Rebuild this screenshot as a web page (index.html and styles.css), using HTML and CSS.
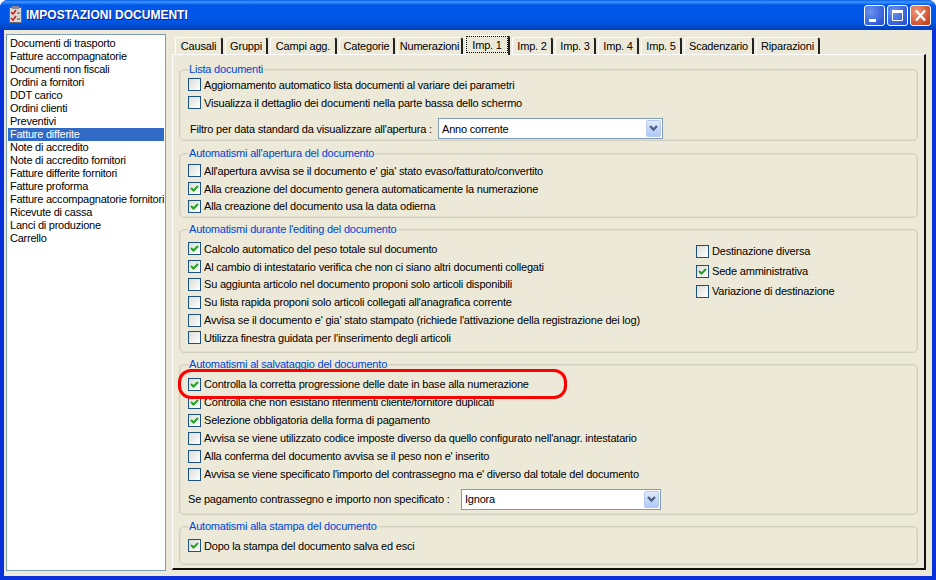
FILE: index.html
```html
<!DOCTYPE html>
<html lang="it">
<head>
<meta charset="utf-8">
<title>Impostazioni documenti</title>
<link rel="stylesheet" href="styles.css">
</head>
<body>
<div class="window">
  <header class="titlebar">
    <svg class="app-icon" width="14" height="18" viewBox="0 0 14 18"><rect x="0.5" y="1.5" width="12" height="15" fill="#d8d8d0" stroke="#667"/><rect x="3" y="0" width="7" height="3" fill="#889"/><path d="M2 6l2 2 3-4M2 12l2 2 3-4" fill="none" stroke="#c22" stroke-width="1.6"/><path d="M8 7h3M8 13h3" stroke="#445"/></svg>
    <span class="title">IMPOSTAZIONI DOCUMENTI</span>
    <div class="controls">
      <button class="ctl ctl-blue"><svg width="21" height="21" viewBox="0 0 21 21"><rect x="5" y="14" width="7" height="3" fill="#fff"/></svg></button>
      <button class="ctl ctl-blue"><svg width="21" height="21" viewBox="0 0 21 21"><path d="M5.5 5.5h10v10h-10z" fill="none" stroke="#fff"/><rect x="5" y="5" width="11" height="3" fill="#fff"/></svg></button>
      <button class="ctl ctl-red"><svg width="21" height="21" viewBox="0 0 21 21"><path d="M6 5.5l9 10M15 5.5l-9 10" stroke="#fff" stroke-width="2.2"/></svg></button>
    </div>
  </header>
  <main class="client">
    <ul class="list">
      <li>Documenti di trasporto</li>
      <li>Fatture accompagnatorie</li>
      <li>Documenti non fiscali</li>
      <li>Ordini a fornitori</li>
      <li>DDT carico</li>
      <li>Ordini clienti</li>
      <li>Preventivi</li>
      <li class="selected">Fatture differite</li>
      <li>Note di accredito</li>
      <li>Note di accredito fornitori</li>
      <li>Fatture differite fornitori</li>
      <li>Fatture proforma</li>
      <li>Fatture accompagnatorie fornitori</li>
      <li>Ricevute di cassa</li>
      <li>Lanci di produzione</li>
      <li>Carrello</li>
    </ul>
    <section class="tabs-area">
      <nav class="tabs">
        <span class="tab w-causali">Causali</span>
        <span class="tab w-gruppi">Gruppi</span>
        <span class="tab w-campi">Campi agg.</span>
        <span class="tab w-categorie">Categorie</span>
        <span class="tab w-numer">Numerazioni</span>
        <span class="tab active"><span class="focus">Imp. 1</span></span>
        <span class="tab w-imp">Imp. 2</span>
        <span class="tab w-imp">Imp. 3</span>
        <span class="tab w-imp">Imp. 4</span>
        <span class="tab w-imp">Imp. 5</span>
        <span class="tab w-scad">Scadenzario</span>
        <span class="tab w-rip">Riparazioni</span>
      </nav>
      <div class="page">
        <fieldset class="group g1">
          <legend>Lista documenti</legend>
          <label class="row"><i class="cb"></i>Aggiornamento automatico lista documenti al variare dei parametri</label>
          <label class="row"><i class="cb"></i>Visualizza il dettaglio dei documenti nella parte bassa dello schermo</label>
          <div class="combo-row cr1"><span class="combo-label l1">Filtro per data standard da visualizzare all'apertura :</span>
            <div class="combo c1"><span>Anno corrente</span><b class="arrow"><svg width="9" height="7" viewBox="0 0 9 7"><path d="M1 1l3.5 3.5L8 1" fill="none" stroke="#4d6185" stroke-width="2.4"/></svg></b></div></div>
        </fieldset>
        <fieldset class="group g2">
          <legend>Automatismi all'apertura del documento</legend>
          <label class="row"><i class="cb"></i>All'apertura avvisa se il documento e' gia' stato evaso/fatturato/convertito</label>
          <label class="row"><i class="cb on"><svg viewBox="0 0 11 11"><path d="M2 5l2.5 2.5L9 3" fill="none" stroke="#21a121" stroke-width="2"/></svg></i>Alla creazione del documento genera automaticamente la numerazione</label>
          <label class="row"><i class="cb on"><svg viewBox="0 0 11 11"><path d="M2 5l2.5 2.5L9 3" fill="none" stroke="#21a121" stroke-width="2"/></svg></i>Alla creazione del documento usa la data odierna</label>
        </fieldset>
        <fieldset class="group g3">
          <legend>Automatismi durante l'editing del documento</legend>
          <div class="cols">
            <div class="col-left">
              <label class="row"><i class="cb on"><svg viewBox="0 0 11 11"><path d="M2 5l2.5 2.5L9 3" fill="none" stroke="#21a121" stroke-width="2"/></svg></i>Calcolo automatico del peso totale sul documento</label>
              <label class="row"><i class="cb on"><svg viewBox="0 0 11 11"><path d="M2 5l2.5 2.5L9 3" fill="none" stroke="#21a121" stroke-width="2"/></svg></i>Al cambio di intestatario verifica che non ci siano altri documenti collegati</label>
              <label class="row"><i class="cb"></i>Su aggiunta articolo nel documento proponi solo articoli disponibili</label>
              <label class="row"><i class="cb"></i>Su lista rapida proponi solo articoli collegati all'anagrafica corrente</label>
              <label class="row"><i class="cb"></i>Avvisa se il documento e' gia' stato stampato (richiede l'attivazione della registrazione dei log)</label>
              <label class="row"><i class="cb"></i>Utilizza finestra guidata per l'inserimento degli articoli</label>
            </div>
            <div class="col-right">
              <label class="row r20"><i class="cb"></i>Destinazione diversa</label>
              <label class="row r20"><i class="cb on"><svg viewBox="0 0 11 11"><path d="M2 5l2.5 2.5L9 3" fill="none" stroke="#21a121" stroke-width="2"/></svg></i>Sede amministrativa</label>
              <label class="row r20"><i class="cb"></i>Variazione di destinazione</label>
            </div>
          </div>
        </fieldset>
        <fieldset class="group g4">
          <legend>Automatismi al salvataggio del documento</legend>
          <label class="row"><i class="cb on"><svg viewBox="0 0 11 11"><path d="M2 5l2.5 2.5L9 3" fill="none" stroke="#21a121" stroke-width="2"/></svg></i>Controlla la corretta progressione delle date in base alla numerazione</label>
          <label class="row"><i class="cb on"><svg viewBox="0 0 11 11"><path d="M2 5l2.5 2.5L9 3" fill="none" stroke="#21a121" stroke-width="2"/></svg></i>Controlla che non esistano riferimenti cliente/fornitore duplicati</label>
          <label class="row"><i class="cb on"><svg viewBox="0 0 11 11"><path d="M2 5l2.5 2.5L9 3" fill="none" stroke="#21a121" stroke-width="2"/></svg></i>Selezione obbligatoria della forma di pagamento</label>
          <label class="row"><i class="cb"></i>Avvisa se viene utilizzato codice imposte diverso da quello configurato nell'anagr. intestatario</label>
          <label class="row"><i class="cb"></i>Alla conferma del documento avvisa se il peso non e' inserito</label>
          <label class="row"><i class="cb"></i>Avvisa se viene specificato l'importo del contrassegno ma e' diverso dal totale del documento</label>
          <div class="combo-row cr2"><span class="combo-label l2">Se pagamento contrassegno e importo non specificato :</span>
            <div class="combo c2"><span>Ignora</span><b class="arrow"><svg width="9" height="7" viewBox="0 0 9 7"><path d="M1 1l3.5 3.5L8 1" fill="none" stroke="#4d6185" stroke-width="2.4"/></svg></b></div></div>
        </fieldset>
        <fieldset class="group g5">
          <legend>Automatismi alla stampa del documento</legend>
          <label class="row"><i class="cb on"><svg viewBox="0 0 11 11"><path d="M2 5l2.5 2.5L9 3" fill="none" stroke="#21a121" stroke-width="2"/></svg></i>Dopo la stampa del documento salva ed esci</label>
        </fieldset>
      </div>
    </section>
    <div class="highlight"></div>
  </main>
</div>
</body>
</html>
```
FILE: styles.css
```css
* { box-sizing: border-box; }
html, body { margin: 0; padding: 0; }
body { width: 936px; height: 580px; overflow: hidden; font-family: "Liberation Sans", Arial, sans-serif; font-size: 11px; letter-spacing: -0.2px; color: #000; }
.window { width: 936px; height: 580px; display: flex; flex-direction: column; background: #0831d9; border-radius: 8px 8px 0 0; overflow: hidden; }
.titlebar { height: 30px; flex: none; display: flex; align-items: center; padding: 0 5px 0 9px; background: linear-gradient(#0a5ee0 0, #3d95ff 2px, #0058e8 5px, #0055e5 22px, #0048c8 27px, #0040c0 30px); }
.app-icon { margin-right: 3px; }
.title { color: #fff; font-weight: bold; font-size: 12px; letter-spacing: 0; text-shadow: 1px 1px 0 #0f1f90; }
.controls { margin-left: auto; display: flex; gap: 2px; }
.ctl { width: 21px; height: 21px; padding: 0; border: 1px solid #fff; border-radius: 3px; display: block; }
.ctl svg { display: block; margin: -1px; }
.ctl-blue { background: radial-gradient(circle at 30% 30%, #6b93ef, #2450d0 90%); }
.ctl-red { background: radial-gradient(circle at 30% 30%, #ef9a7c, #c8401c 85%); }
.client { position: relative; flex: 1; margin: 0 4px 4px; background: #ece9d8; display: flex; padding: 4px 0 0 2px; }
.list { width: 160px; height: 537px; margin: 0; padding: 2px 1px 2px 1px; list-style: none; background: #fff; border: 1px solid #7f9db9; flex: none; letter-spacing: -0.24px; }
.list li { height: 13px; line-height: 13px; padding-left: 2px; white-space: nowrap; }
.list li.selected { background: #316ac5; color: #fff; }
.tabs-area { margin-left: 6px; width: 754px; display: flex; flex-direction: column; }
.tabs { height: 20px; display: flex; align-items: flex-end; padding-left: 3px; gap: 2px; }
.tab { height: 17px; line-height: 17px; text-align: center; background: #ece9d8; border-top: 1px solid #fff; border-left: 1px solid #fff; border-right: 2px solid #222; border-radius: 3px 3px 0 0; white-space: nowrap; }
.w-causali { width: 48px; } .w-gruppi { width: 43px; } .w-campi { width: 67px; } .w-categorie { width: 56px; } .w-numer { width: 66px; } .w-imp { width: 41px; } .w-scad { width: 70px; } .w-rip { width: 64px; }
.tab.active { width: 45px; height: 20px; margin-bottom: -1px; position: relative; z-index: 1; padding: 0 0 2px 0; line-height: 20px; border-bottom: 0; }
.focus { display: block; outline: 1px dotted #000; outline-offset: -1px; height: 17px; line-height: 19px; }
.page { height: 516px; border-top: 1px solid #fff; border-left: 1px solid #fff; border-right: 2px solid #111; border-bottom: 2px solid #111; padding: 8px 6px 0; display: flex; flex-direction: column; }
.group { margin: 0; padding: 0 0 0 8px; border: 1px solid #d0cfbd; box-shadow: inset 0 0 0 1px #e2dfce; border-radius: 5px; min-width: 0; flex: none; }
.group legend { padding: 0 2px 0 1px; margin-left: 0; color: #0046d5; line-height: 13px; height: 13px; }
.g1 { height: 78px; margin-bottom: 6px; }
.g2 { height: 71px; margin-bottom: 5px; }
.g3 { height: 130px; margin-bottom: 5px; }
.g4 { height: 157px; margin-bottom: 5px; }
.g5 { height: 45px; }
.row { display: flex; align-items: center; height: 17.8px; white-space: nowrap; }
.cb { width: 13px; height: 13px; flex: none; margin-right: 3px; border: 1px solid #1c5180; background: linear-gradient(135deg, #dcdcd7, #fff); display: block; font-style: normal; }
.cb svg { display: block; width: 11px; height: 11px; }
.g2 .row:first-of-type { margin-top: 2px; }
.g3 .cols { display: flex; margin-top: 4px; }
.col-left { width: 508px; }
.col-right { margin-top: 1px; }
.r20 { height: 20px; }
.g4 .row { height: 18px; }
.g4 .row:first-of-type { margin-top: 4px; }
.g5 .row { margin-top: 4px; }
.combo-row { display: flex; align-items: center; height: 22px; white-space: nowrap; }
.cr1 { margin-top: 6px; }
.cr2 { margin-top: 5px; }
.l1 { width: 250px; padding-left: 2px; }
.l2 { width: 273px; }
.combo { height: 21px; border: 1px solid #7f9db9; background: #fff; display: flex; align-items: center; justify-content: space-between; padding: 0 1px 0 3px; }
.c1 { width: 225px; }
.c2 { width: 200px; }
.arrow { width: 15px; height: 17px; background: linear-gradient(#e1eafe, #aec8f7); border: 1px solid #b4c8f0; border-radius: 2px; display: flex; align-items: center; justify-content: center; }
.highlight { position: absolute; left: 174px; top: 339px; width: 389px; height: 30px; border: 3px solid #f00; border-radius: 13px; pointer-events: none; }
```
